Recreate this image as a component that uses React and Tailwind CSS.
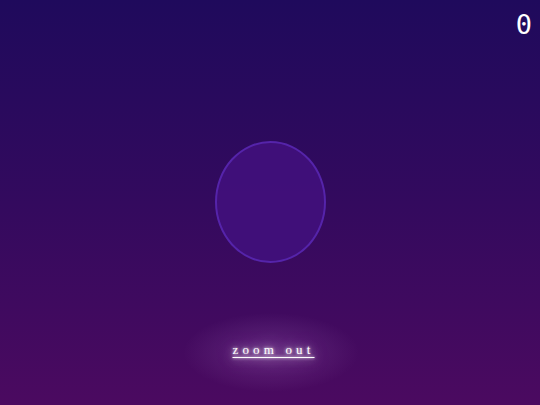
export default function App() {
  return (
    <div className="relative h-[405px] w-[540px] overflow-hidden bg-[linear-gradient(to_bottom,#1f0a5c_0%,#330a5e_50%,#4b0a60_100%)]">
      <div className="absolute right-[8px] top-[7px] font-['DejaVu_Sans_Mono',monospace] text-[27px] leading-[36px] text-white">
        0
      </div>
      <div className="flex flex-col items-center pt-[141px]">
        <div className="h-[122px] w-[111px] rounded-[50%] border-2 border-[#5524aa] bg-[#41107c]/90"></div>
        <div className="ml-[2px] mt-[41px] bg-[radial-gradient(closest-side_at_50%_55%,rgba(230,180,255,0.2)_0%,rgba(230,180,255,0.09)_50%,transparent_100%)] px-[44px] py-[32px]">
          <a
            href="#"
            className="pl-[5px] font-['Liberation_Serif',serif] text-[13px] leading-[20px] tracking-[0.32em] text-white underline decoration-1 underline-offset-[3px] [text-shadow:0_0_3px_#fff,0_0_8px_rgba(255,255,255,0.7),0_0_18px_rgba(255,220,255,0.5)]"
          >
            zoom out
          </a>
        </div>
      </div>
    </div>
  );
}
